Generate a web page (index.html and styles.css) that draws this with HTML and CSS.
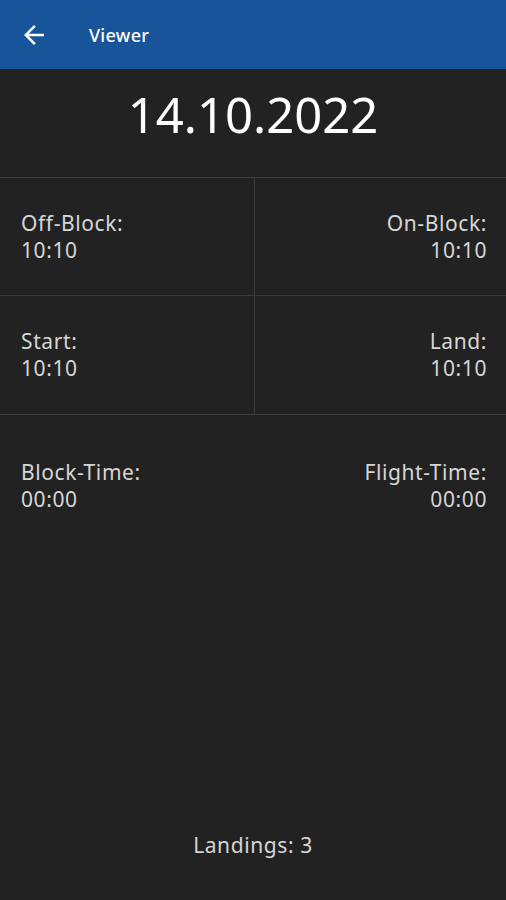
FILE: index.html
```html
<!DOCTYPE html>
<html lang="en">
<head>
  <meta charset="UTF-8">
  <meta name="viewport" content="width=device-width, initial-scale=1.0">
  <title>Viewer</title>
  <link rel="stylesheet" href="styles.css">
</head>
<body>
  <div class="app">
    <header class="toolbar">
      <button class="back" type="button" aria-label="Back">
        <svg width="30" height="30" viewBox="0 0 24 24">
          <path d="M20 11H7.83l5.59-5.59L12 4l-8 8 8 8 1.41-1.41L7.83 13H20v-2z" fill="#fff"/>
        </svg>
      </button>
      <span class="title">Viewer</span>
    </header>

    <main class="content">
      <h1 class="date">14.10.2022</h1>

      <div class="grid">
        <div class="cell">
          <span class="label">Off-Block:</span>
          <span class="value">10:10</span>
        </div>
        <div class="cell right">
          <span class="label">On-Block:</span>
          <span class="value">10:10</span>
        </div>
        <div class="cell">
          <span class="label">Start:</span>
          <span class="value">10:10</span>
        </div>
        <div class="cell right">
          <span class="label">Land:</span>
          <span class="value">10:10</span>
        </div>
      </div>

      <div class="totals">
        <div class="total">
          <span class="label">Block-Time:</span>
          <span class="value">00:00</span>
        </div>
        <div class="total right">
          <span class="label">Flight-Time:</span>
          <span class="value">00:00</span>
        </div>
      </div>

      <p class="landings">Landings: 3</p>
    </main>
  </div>
</body>
</html>
```

FILE: styles.css
```css
* {
  margin: 0;
  padding: 0;
  box-sizing: border-box;
  font-family: 'Noto Sans', 'Open Sans', sans-serif;
}

body {
  background: #222222;
  height: 100vh;
}

.app {
  display: flex;
  flex-direction: column;
  height: 100vh;
}

.toolbar {
  display: flex;
  align-items: center;
  height: 69px;
  background: #18549a;
  padding-left: 19px;
}

.back {
  display: flex;
  background: none;
  border: none;
  width: 30px;
  height: 30px;
  margin-right: 40px;
}

.title {
  color: #ffffff;
  font-size: 18px;
  font-weight: 500;
  letter-spacing: 0.3px;
}

.content {
  flex: 1;
  display: flex;
  flex-direction: column;
}

.date {
  color: #ffffff;
  font-size: 49px;
  font-weight: 400;
  text-align: center;
  height: 108px;
  line-height: 90px;
}

.grid {
  display: grid;
  grid-template-columns: 255px 1fr;
  border-top: 1px solid #3c3c3c;
  border-bottom: 1px solid #3c3c3c;
}

.cell {
  display: flex;
  flex-direction: column;
  justify-content: center;
  height: 118px;
  padding: 0 19px 0 21px;
}

.cell:nth-child(odd) {
  border-right: 1px solid #3c3c3c;
}

.cell:nth-child(-n+2) {
  border-bottom: 1px solid #3c3c3c;
}

.right {
  align-items: flex-end;
  text-align: right;
}

.label,
.value {
  color: #d6d6d6;
  font-size: 21px;
  line-height: 27px;
  letter-spacing: 0.6px;
}

.totals {
  display: flex;
  justify-content: space-between;
  padding: 44px 19px 0 21px;
}

.total {
  display: flex;
  flex-direction: column;
}

.landings {
  margin-top: auto;
  margin-bottom: 41px;
  text-align: center;
  color: #d6d6d6;
  font-size: 21px;
  line-height: 27px;
  letter-spacing: 0.6px;
}
```
